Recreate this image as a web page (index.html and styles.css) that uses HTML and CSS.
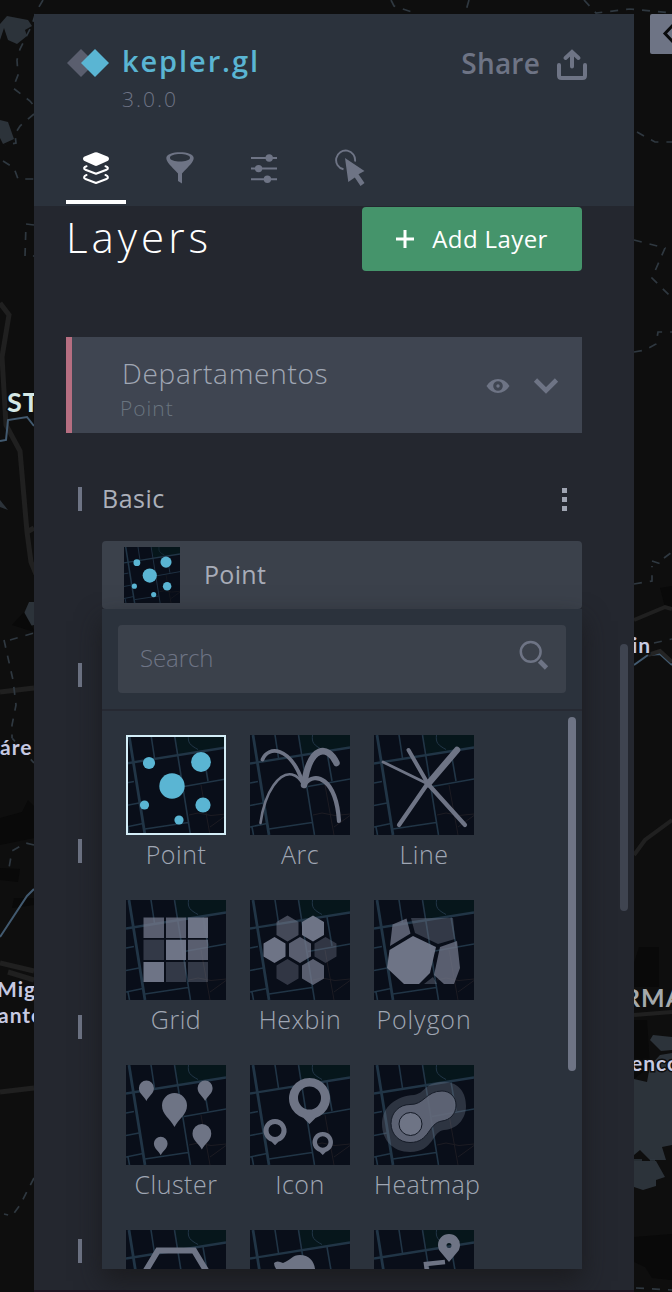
FILE: index.html
```html
<!DOCTYPE html>
<html lang="en">
<head>
<meta charset="utf-8">
<title>kepler.gl</title>
<link rel="stylesheet" href="styles.css">
</head>
<body>
<svg class="defs" width="0" height="0" aria-hidden="true">
  <symbol id="basemap" viewBox="0 0 100 100">
    <rect width="100" height="100" fill="#090e19"/>
    <path d="M49 0H100V12L53 20Z" fill="#06161b"/>
    <g fill="none" stroke="#213546">
      <path d="M3 0L19 100" stroke-width="2.8"/>
      <path d="M0 28.5L100 12.5" stroke-width="2.3"/>
      <path d="M25 0L28.5 23M48.500 0L64.500 100M77 17L82 46M58 51.500L100 44M0 48L8 46.500M0 70.500L13 68M0 92L17 88.500M2 92L3.500 100M19 94L62 87.500" stroke-width="1.600"/>
      <path d="M62.500 0C61.500 8 64 10 72 14.500" stroke-width="1"/>
    </g>
    <path d="M75 50L84 100M63 80L72 78L85 80.500L100 79M84 92L100 80.500" fill="none" stroke="#1d1c23" stroke-width="1"/>
  </symbol>
  <symbol id="points" viewBox="0 0 100 100">
    <g fill="#5ab5d3"><circle cx="23" cy="28" r="6.100"/><circle cx="75" cy="27" r="9.900"/><circle cx="46" cy="51" r="12.700"/><circle cx="18.500" cy="70" r="4.600"/><circle cx="77" cy="70" r="7.600"/><circle cx="53" cy="85" r="4.600"/></g>
  </symbol>
</svg>

<svg class="map" viewBox="0 0 672 1292">
  <g class="slate">
    <path d="M0 24L7 16L28 20L32 26L25 30L27 36L17 44L8 40L4 28L0 40Z"/>
    <path d="M0 120L8 122L14 139L3 144L0 138Z"/>
    <path d="M0 500L8 510L0 507Z"/><path d="M29 602H34V625L25 627L22 618Z"/>
    <path d="M650 1040L653 1035L672 1037V1050L661 1051Z"/>
    <path d="M634 1079L647 1082L650 1066L660 1055L672 1053V1145L662 1147L666 1160H650L640 1150L634 1155Z"/>
    <path d="M634 1161H656L665 1177L656 1180V1186L643 1190L634 1187Z"/>
  </g>
  <g fill="#090909">
    <path d="M0 818L22 812L28 800L34 806V838L0 845Z"/><path d="M0 868L20 869L18 882L0 880Z"/><path d="M14 898H34V905L12 908Z"/>
    <path d="M12 625L24 612L34 630V632Z"/><path d="M660 588L672 586V611L665 607Z"/>
    <path d="M634 963L639 947H659V987H634Z"/><path d="M634 1020H647L650 1066L634 1079Z"/><path d="M634 1237L672 1234V1280L652 1278L645 1267L634 1262Z"/>
  </g>
  <g fill="none" stroke="#202020" stroke-width="5">
    <path d="M0 303L9 315L2 357L6 425L20 451L27 532L31 562L36 574M27 532L34 528"/>
    <path d="M0 692L34 688M0 963L34 971M8 972L34 980M0 1092L34 1088"/>
    <path d="M634 620L665 607L672 609M634 855L645 840L672 820M634 1015L672 1012" stroke-width="4"/>
  </g>
  <g class="dash">
    <path d="M43 0L36 12L32 25L20 49L17 60L18 75L13 88L30 101L34 106"/>
    <path d="M34 114L20 126L15 134L16 143L5 145"/><path d="M3 161L14 168L18 179H34"/>
    <path d="M34 225L26 224L25 256H34"/><path d="M4 640L13 680L16 705L12 725V738L34 763"/>
    <path d="M34 845L26 843L12 851L9 868"/><path d="M34 1178L20 1205L12 1216L4 1214"/><path d="M10 640L34 633"/>
    <path d="M391 0L394 6L418 14M469 0L465 14M584 0L596 13L630 9L672 13"/>
    <path d="M637 132L655 142H672M634 240L665 248L652 278L672 298M634 352L645 350L656 344L658 332H672"/>
    <path d="M634 584L652 581L652 566M652 561L661 564M664 558L672 552M636 1288L672 1290M654 643L672 639M634 1160H655"/>
  </g>
  <g fill="none" stroke="#425a70" stroke-width="2"><path d="M0 441L6 440L8 420L27 417L34 426M34 889L27 896L0 937M634 665L648 655L660 654L672 665"/></g>
  <path d="M648 655L660 651L672 662" fill="none" stroke="#242424" stroke-width="4"/>
  <g class="place">
    <text class="city" x="7" y="412">ST</text>
    <text x="0" y="755">áre</text><text x="-3" y="997">Mig</text><text x="-2" y="1023">ante</text>
    <text x="632" y="653">in</text><text class="region" x="624" y="1007">RMA</text><text x="631" y="1071">enco</text>
  </g>
</svg>

<div class="collapse"><svg width="22" height="40" viewBox="0 0 22 40"><path d="M25 9L15 19.500L25 30" fill="none" stroke="#08090b" stroke-width="3"/></svg></div>

<main class="panel">
  <header class="header">
    <div class="brand-row">
      <svg class="logo" width="44" height="30" viewBox="0 0 44 30"><path d="M15 1L29 15L15 29L1 15Z" fill="#5a5e6e"/><path d="M29 1L43 15L29 29L15 15Z" fill="#5ab5d3"/></svg>
      <div class="brand"><div class="brand-name">kepler.gl</div><div class="version">3.0.0</div></div>
      <div class="share"><span>Share</span>
        <svg width="30" height="32" viewBox="0 0 30 32" fill="none" stroke="#6e7485" stroke-width="4" stroke-linecap="round"><path d="M2 16V26.500Q2 29 4.500 29H25.500Q28 29 28 26.500V16"/><path d="M15 3.500V17.500M8.500 9L15 3L21.500 9"/></svg>
      </div>
    </div>
    <nav class="tabs">
      <div class="tab active"><svg width="28" height="34" viewBox="82 151 28 34"><path d="M94.500 152.600Q96 152 97.500 152.600L108 156.700Q110 158.800 108 160.800L97.500 165.600Q96 166.200 94.500 165.600L84 160.800Q82 158.800 84 156.700Z" fill="#fff"/><g fill="none" stroke="#fff" stroke-width="2.100" stroke-linecap="round" stroke-linejoin="round"><path d="M86.500 166.200C83.500 167 83.500 169 85.500 169.700L96 173.800L106.500 169.700C108.500 169 108.500 167 105.500 166.200M86.500 175C83.500 176 83.500 178.300 85.500 179L96 183L106.500 179C108.500 178.300 108.500 176 105.500 175"/></g></svg></div>
      <div class="tab"><svg width="28" height="34" viewBox="166 151 28 34"><path fill-rule="evenodd" fill="#6e7485" d="M166.300 158C166.300 150.200 193.700 150.200 193.700 158C193.700 162 189 166 182 173.500V183.500L178 181V173.500C171 166 166.300 162 166.300 158ZM170 157.800C170 162.800 190 162.800 190 157.800C190 152.800 170 152.800 170 157.800Z"/></svg></div>
      <div class="tab"><svg width="28" height="34" viewBox="250 151 28 34"><g fill="#6e7485"><path d="M251 157H277V159H251ZM251 167.600H277V169.600H251ZM251 178.200H277V180.200H251Z"/><circle cx="269.200" cy="158" r="3.700"/><circle cx="258.600" cy="168.600" r="3.700"/><circle cx="267.400" cy="179.200" r="3.700"/></g></svg></div>
      <div class="tab"><svg width="32" height="38" viewBox="334 149 32 38"><path d="M343.500 169.300A9.500 9.500 0 1 1 355 161.500" fill="none" stroke="#6e7485" stroke-width="1.900"/><path d="M345 158L364.500 171L358.500 174.300L364.500 183L360.500 186L354.800 177.500L348.300 182Z" fill="#6e7485"/></svg></div>
    </nav>
  </header>

  <section class="content">
    <div class="title-row"><h1>Layers</h1>
      <button class="add"><svg width="18" height="18" viewBox="0 0 18 18"><path d="M9 0V18M0 9H18" stroke="#fff" stroke-width="3"/></svg><span>Add Layer</span></button>
    </div>

    <div class="layer">
      <div class="layer-text"><div class="layer-name">Departamentos</div><div class="layer-type">Point</div></div>
      <svg class="eye" width="24" height="16" viewBox="0 0 24 16"><path fill-rule="evenodd" fill="#6e7485" d="M.5 8Q5 1 12 1T23.500 8Q19 15 12 15T.5 8ZM12 3.200A4.800 4.800 0 1 0 12 12.800A4.800 4.800 0 1 0 12 3.200Z"/><circle cx="12" cy="8" r="1.700" fill="#6e7485"/></svg>
      <svg width="26" height="18" viewBox="0 0 26 18"><path d="M2.500 3L13 13.500L23.500 3" fill="none" stroke="#6e7485" stroke-width="4.600"/></svg>
    </div>

    <div class="config">
      <div class="group basic">
        <div class="group-head"><span>Basic</span><i class="dots"><b></b><b></b><b></b></i></div>
        <div class="select">
          <svg width="56" height="56" viewBox="0 0 100 100"><use href="#basemap"/><use href="#points"/></svg><span class="value">Point</span>
          <div class="dropdown">
            <div class="search-wrap"><div class="search"><span class="value">Search</span><svg width="30" height="30" viewBox="0 0 30 30"><circle cx="11.700" cy="11.800" r="9.900" fill="none" stroke="#6e7485" stroke-width="2.500"/><path d="M20.500 21L27.500 28" stroke="#6e7485" stroke-width="4.600"/></svg></div></div>
            <div class="list">
              <div class="tile"><svg class="selected" viewBox="0 0 100 100"><use href="#basemap"/><use href="#points"/></svg><span>Point</span></div>
              <div class="tile"><svg viewBox="0 0 100 100"><use href="#basemap"/><g fill="none" stroke="#6e7485" stroke-linecap="round"><path d="M10.500 88C15 55 30 37 42 39.500Q49 41 54 51" stroke-width="2.600"/><path d="M12.500 24.500C18 11 40 10 53 48" stroke-width="3.800"/><path d="M54 50C60 9 78 10 86.500 28" stroke-width="6.500"/><path d="M55 49C65 36 86 43 89 86" stroke-width="4.200"/></g></svg><span>Arc</span></div>
              <div class="tile"><svg viewBox="0 0 100 100"><use href="#basemap"/><g fill="none" stroke="#6e7485" stroke-linecap="round"><path d="M9 27L54 49" stroke-width="2.800"/><path d="M34.500 15L54 49" stroke-width="4"/><path d="M83 15L54 49" stroke-width="6.500"/><path d="M25 90L54 48M91 90L54 49" stroke-width="4.200"/></g></svg><span>Line</span></div>

              <div class="tile"><svg viewBox="0 0 100 100"><use href="#basemap"/><g fill="#747a8c"><path d="M17.500 17.500H38V38H17.500ZM40 17.500H60V38H40ZM62 39.800H82V60H62Z" opacity=".75"/><path d="M62 17.500H82V38H62ZM40 39.800H60V60H40ZM17.500 62H38V82H17.500Z" opacity=".95"/><path d="M17.500 39.800H38V60H17.500ZM40 62H60V82H40ZM62 62H82V82H62Z" opacity=".4"/></g></svg><span>Grid</span></div>
              <div class="tile"><svg viewBox="0 0 100 100"><use href="#basemap"/><g fill="#747a8c"><path opacity=".55" d="M37.500 15.500L48.500 22V35L37.500 41.500L26.500 35V22Z"/><path opacity=".95" d="M63 15.500L74 22V35L63 41.500L52 35V22ZM24.500 37L35.500 43.500V56.500L24.500 63L13.500 56.500V43.500Z"/><path opacity=".75" d="M50 37L61 43.500V56.500L50 63L39 56.500V43.500ZM63 59L74 65.500V78.500L63 85L52 78.500V65.500Z"/><path opacity=".38" d="M75.500 37L86.500 43.500V56.500L75.500 63L64.500 56.500V43.500ZM37.500 59L48.500 65.500V78.500L37.500 85L26.500 78.500V65.500Z"/></g></svg><span>Hexbin</span></div>
              <div class="tile"><svg viewBox="0 0 100 100"><use href="#basemap"/><g fill="#747a8c"><path opacity=".75" d="M18.500 24.500L32.500 18.500L36.500 33.500L16 46ZM66 47L83 41L86 68L80 84H70L60 75Z"/><path opacity=".4" d="M37 18H79L81 39L64 44L41 33ZM50 84L59 77L63 84Z"/><path opacity=".95" d="M39 36L62 47L56 73L45 84H30L13 68L15.500 50Z"/></g></svg><span class="wide">Polygon</span></div>

              <div class="tile"><svg viewBox="0 0 100 100"><use href="#basemap"/><g fill="#6e7485"><path id="drop" d="M48.500 62C44 53 36 50 36 40.500A12.500 12.500 0 0 1 61 40.500C61 50 53 53 48.500 62Z"/><use href="#drop" transform="translate(-8.700 -1.200) scale(.6)"/><use href="#drop" transform="translate(50 -1.200) scale(.6)"/><use href="#drop" transform="translate(39.500 38) scale(.75)"/><use href="#drop" transform="translate(8.300 56.500) scale(.545)"/></g></svg><span>Cluster</span></div>
              <div class="tile"><svg viewBox="0 0 100 100"><use href="#basemap"/><path id="pin" fill="#6e7485" fill-rule="evenodd" d="M59.500 59L53.500 53A20.500 20.500 0 1 1 65.500 53ZM59.500 21.500A11.500 11.500 0 1 0 59.500 44.500A11.500 11.500 0 1 0 59.500 21.500Z"/><use href="#pin" transform="translate(-8.600 46.800) scale(.565)"/><use href="#pin" transform="translate(43 60.500) scale(.5)"/></svg><span>Icon</span></div>
              <div class="tile"><svg viewBox="0 0 100 100"><use href="#basemap"/><path d="M40 30C52 28 50 17 70 17C86 17 92 29 92 41C92 53 84 64 70 65C58 66 60 87 36 87C19 87 8 75 8 59C8 42 22 31 40 30Z" fill="#747a8c" opacity=".35"/><path d="M36 39.500C50 40 52 26 68 26C76 26 82 32 82 40C82 49 76 55 68 56C54 58 56 77.500 36 77.500C25 77.500 17 69 17 58.500C17 48 25 39.500 36 39.500Z" fill="#656b7c" opacity=".85" stroke="#121824"/><circle cx="36.500" cy="59" r="11.500" fill="#6e7485" stroke="#121824"/></svg><span class="overflowing">Heatmap</span></div>

              <div class="tile"><svg viewBox="0 0 100 100"><use href="#basemap"/><path d="M16 47L32 20.500H68L84 47L68 76H32Z" fill="none" stroke="#6e7485" stroke-width="6"/></svg></div>
              <div class="tile"><svg viewBox="0 0 100 100"><use href="#basemap"/><path d="M24 33Q27 30 33 33C41 30 42 25 50 25C60 25 66 33 65 43L60 60H40L36 48Q24 40 24 33Z" fill="#6e7485"/></svg></div>
              <div class="tile"><svg viewBox="0 0 100 100"><use href="#basemap"/><path fill-rule="evenodd" d="M75 32L67.500 23A11 11 0 1 1 82.500 23ZM75 13A2.500 2.500 0 1 0 75 18A2.500 2.500 0 1 0 75 13Z" fill="#6e7485"/><path d="M71 32L52 34L54 48" fill="none" stroke="#6e7485" stroke-width="4.500"/></svg></div>
            </div>
            <i class="thumb"></i>
          </div>
        </div>
      </div>
      <div class="group"></div><div class="group"></div><div class="group tall"></div><div class="group"></div>
    </div>
  </section>
  <i class="panel-thumb"></i>
</main>
</body>
</html>
```
FILE: styles.css
```css
* { box-sizing: border-box; }
body { margin: 0; width: 672px; height: 1292px; position: relative; overflow: hidden; background: #0e0e0e; font-family: "Open Sans", "Noto Sans", sans-serif; color: #a0a7b4; }
svg { display: block; flex: none; }
.defs { position: absolute; }
.map { position: absolute; left: 0; top: 0; width: 672px; height: 1292px; }
.slate { fill: #2c333a; }
.dash { fill: none; stroke: #2f3840; stroke-width: 1.7; stroke-dasharray: 8 8; }
.place { font: 700 21px Lato, sans-serif; letter-spacing: 1px; fill: #c6c9e2; stroke: #0e0e0e; stroke-width: 3px; paint-order: stroke; }
.city { font-size: 27px; fill: #d5e8e5; }
.region { font-size: 25px; fill: #a5aaac; }
.collapse { position: absolute; left: 650px; top: 14px; width: 22px; height: 40px; background: #6e7485; border-radius: 2px 0 0 2px; overflow: hidden; }

.panel { position: absolute; left: 34px; top: 14px; width: 600px; height: 1278px; overflow: hidden; background: #24272f; border-bottom: 2px solid #1e1522; }
.header { height: 192px; background: #2b323c; padding: 0 46px 0 32px; display: flex; flex-direction: column; justify-content: space-between; }
.brand-row { display: flex; align-items: flex-start; padding-top: 27px; }
.logo { margin: 7px 12px 0 0; }
.brand-name { font-size: 29px; font-weight: 600; line-height: 40px; letter-spacing: 1.9px; color: #5ab5d3; }
.version { font-size: 21px; font-weight: 300; line-height: 30px; margin-top: 3px; letter-spacing: 2px; color: #6e7485; }
.share { margin-left: auto; margin-right: 1px; display: flex; align-items: center; gap: 17px; height: 44px; font-size: 28px; font-weight: 600; color: #6e7485; }
.share span { letter-spacing: .2px; }
.share svg { margin-top: 3px; }
.tabs { display: flex; gap: 24px; }
.tab { width: 60px; height: 60px; display: flex; justify-content: center; padding-top: 7px; border-bottom: 4px solid transparent; margin-bottom: 2px; }
.tab.active { border-color: #fff; }
.tab:last-child { padding: 5px 0 0 4px; }

.content { padding: 1px 52px 0 32px; }
.title-row { display: flex; justify-content: space-between; height: 64px; align-items: center; }
h1 { margin: -4px 0 0; font-size: 42px; font-weight: 300; letter-spacing: 4px; color: #fff; line-height: 60px; }
.add { width: 220px; height: 64px; border: 0; border-radius: 4px; padding: 0 0 2px; background: #45946b; color: #fff; font: 500 24px "Open Sans", sans-serif; letter-spacing: .4px; display: flex; align-items: center; justify-content: center; gap: 18px; }
.add svg { margin-top: 2px; }
.layer { margin-top: 66px; height: 96px; background: #3f4551; border-left: 6px solid #b66e81; display: flex; align-items: center; padding: 2px 23px 0 48px; }
.layer-text { flex: 1; padding-top: 5px; }
.layer-name { font-size: 28px; font-weight: 300; line-height: 38px; padding-left: 2px; letter-spacing: .7px; }
.layer-type { font-size: 21px; font-weight: 300; line-height: 32px; letter-spacing: 1px; color: #69747f; }
.eye { margin-right: 23px; }

.config { padding-top: 54px; }
.group { height: 176px; padding: 0 0 0 36px; position: relative; }
.group.tall { height: 224px; }
.group::before { content: ""; position: absolute; left: 12px; top: 0; width: 4px; height: 24px; background: #6e7485; }
.group-head { height: 24px; display: flex; justify-content: space-between; align-items: center; padding-right: 14px; font-size: 25px; line-height: 24px; color: #acb0ba; letter-spacing: .5px; }
.group-head span { margin-top: -2px; }
.dots { display: flex; flex-direction: column; gap: 4px; width: 5px; margin-right: 1px; }
.dots b { width: 5px; height: 5px; background: #a0a5b2; }
.select { position: relative; z-index: 1; margin-top: 30px; height: 68px; background: #3b414b; border-radius: 4px; display: flex; align-items: center; gap: 24px; padding-left: 22px; font-size: 25px; letter-spacing: .3px; color: #a8acb8; }
.value { padding-bottom: 3px; }
.dropdown { position: absolute; left: 0; top: 68px; width: 480px; height: 660px; background: #2b323c; color: #a0a7b4; box-shadow: 0 12px 24px rgba(25, 25, 28, .8); }
.search-wrap { height: 102px; padding: 16px; border-bottom: 2px solid #262932; }
.search { height: 68px; background: #3b414b; border-radius: 4px; display: flex; justify-content: space-between; align-items: center; padding: 0 17px 0 22px; font-size: 24px; font-weight: 300; letter-spacing: -.1px; color: #6e7485; }
.search svg { margin-bottom: 8px; }
.list { height: 558px; overflow: hidden; display: grid; grid-template-columns: repeat(3, 100px); grid-auto-rows: 141px; gap: 24px; padding: 24px; }
.tile { display: flex; flex-direction: column; align-items: center; font-size: 25px; font-weight: 300; line-height: 39px; letter-spacing: .5px; white-space: nowrap; }
.tile svg { width: 100px; height: 100px; }
.tile .selected { outline: 2px solid #d3edf7; outline-offset: -2px; }
.tile .wide { letter-spacing: .9px; }
.tile .overflowing { align-self: flex-start; letter-spacing: .4px; }
.thumb { position: absolute; right: 6px; top: 108px; width: 8px; height: 354px; border-radius: 4px; background: #6e7485; }
.panel-thumb { position: absolute; right: 6px; top: 630px; width: 8px; height: 267px; border-radius: 4px; background: #3f4450; }
```
